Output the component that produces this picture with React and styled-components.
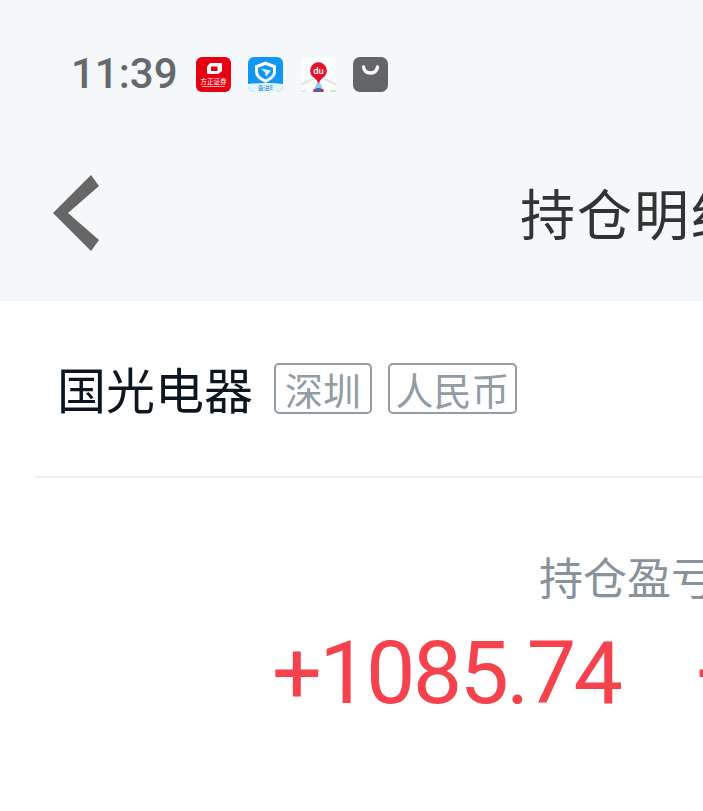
import React from 'react';
import styled, { createGlobalStyle } from 'styled-components';

const Global = createGlobalStyle`
  html, body { margin: 0; padding: 0; background: #fff; }
  body { font-family: Roboto, "Noto Sans CJK SC", sans-serif; }
`;

const Page = styled.div`
  width: 703px;
  height: 811px;
  overflow: hidden;
  background: #fff;
`;

// Top area, status bar + nav
const Header = styled.header`
  height: 301px;
  background: #f4f8fb;
`;

const StatusBar = styled.div`
  display: flex;
  align-items: center;
  height: 74px;
  padding: 37px 0 0 71px;
`;

const Time = styled.span`
  width: 125px;
  font-size: 42px;
  font-weight: 500;
  line-height: 74px;
  color: #66696c;
`;

const AppIcons = styled.div`
  display: flex;
  gap: 17.3px;
`;

const AppIcon = styled.svg`
  display: block;
  width: 35px;
  height: 35px;
`;

const Nav = styled.div`
  display: flex;
  align-items: center;
  height: 130px;
  margin-top: 37px;
  padding-left: 53px;
  white-space: nowrap;
`;

const Back = styled.svg`
  flex: none;
  width: 46px;
  height: 76px;
`;

const Title = styled.h1`
  margin: 0 0 0 421px;
  padding-bottom: 4px;
  font-size: 55px;
  font-weight: 400;
  letter-spacing: 2px;
  color: #333;
  font-family: "Noto Sans CJK SC", sans-serif;
`;

const StockRow = styled.div`
  display: flex;
  align-items: center;
  height: 177px;
  margin-left: 35px;
  padding-left: 22px;
  border-bottom: 2px solid #eef0f3;
  box-sizing: border-box;
`;

const StockName = styled.span`
  padding-bottom: 3px;
  font-size: 49px;
  color: #0b1620;
  font-family: "Noto Sans CJK SC", sans-serif;
  margin-right: 21px;
`;

const Tag = styled.span`
  box-sizing: border-box;
  width: ${props => props.$width}px;
  height: 51px;
  display: flex;
  align-items: center;
  justify-content: center;
  margin-right: 16px;
  border: 2px solid #929ca4;
  border-radius: 5px;
  font-size: 38px;
  color: #929ca4;
  white-space: nowrap;
  font-family: "Noto Sans CJK SC", sans-serif;
`;

const Stats = styled.section`
  padding: 71px 0 0 272px;
  white-space: nowrap;
`;

const StatLabel = styled.div`
  margin-left: 267px;
  font-size: 44px;
  line-height: 54px;
  color: #87929b;
  font-family: "Noto Sans CJK SC", sans-serif;
`;

const StatValues = styled.div`
  display: flex;
  gap: 76px;
  margin-top: 18px;
`;

const StatValue = styled.span`
  font-size: 88px;
  line-height: 104px;
  letter-spacing: -2.7px;
  color: #f5424d;
`;

const FounderIcon = () => (
  <AppIcon viewBox="0 0 35 35">
    <rect width="35" height="35" rx="6" fill="#e60012" />
    <path d="M14 6 H25 a1 1 0 0 1 1 1 V14 L22 17 H12 a1 1 0 0 1 -1 -1 V9.5 Z" fill="#fff" />
    <rect x="15" y="9.5" width="6.5" height="4.5" rx="0.5" fill="#e60012" />
    <text x="17.5" y="26.5" textAnchor="middle" fontSize="6.6" fontFamily="Noto Sans CJK SC" fill="#fff">方正证券</text>
    <rect x="6" y="29" width="23" height="1" fill="#f6a3a3" />
  </AppIcon>
);

const ShieldIcon = () => (
  <AppIcon viewBox="0 0 35 35">
    <rect width="35" height="35" rx="6" fill="#1296f3" />
    <path d="M0 27 Q17.5 25 35 27 V29 a6 6 0 0 1 -6 6 H6 a6 6 0 0 1 -6 -6 Z" fill="#e6f4fd" />
    <path d="M17.5 4.5 L28 8.5 V15 Q28 21 17.5 26 Q7 21 7 15 V8.5 Z" fill="#fff" />
    <path d="M17.5 8 L25 10.8 V15 Q25 19 17.5 22.5 Q10 19 10 15 V10.8 Z" fill="#1296f3" />
    <path d="M13 11.5 L23 13.5 L18 20 L17 15.5 Z" fill="#d9effd" />
    <text x="17.5" y="33" textAnchor="middle" fontSize="6" fontFamily="Noto Sans CJK SC" fill="#1a86d8">备进E</text>
  </AppIcon>
);

const BaiduIcon = () => (
  <AppIcon viewBox="0 0 35 35">
    <rect width="35" height="35" rx="5" fill="#fdfdfd" />
    <path d="M0 26 L11 21 L13 22.5 L0 29 Z M35 26 L24 21 L22 22.5 L35 29 Z" fill="#e4e6e6" />
    <path d="M12 35 L16 25 H19 L23 35 Z" fill="#9ccdec" />
    <rect x="15" y="31" width="5" height="4" fill="#3a6fb0" />
    <rect x="12.5" y="32" width="2.5" height="3" fill="#d8263a" />
    <rect x="20" y="32" width="2.5" height="3" fill="#d8263a" />
    <rect x="29" y="33" width="6" height="2" fill="#cfe8b8" />
    <rect x="0" y="33" width="5" height="2" fill="#d4ecf8" />
    <path d="M17.5 26.5 Q15.5 22 11.5 19.5 A8.4 8.4 0 1 1 23.5 19.5 Q19.5 22 17.5 26.5 Z" fill="#e60f2d" />
    <text x="17.5" y="16.5" textAnchor="middle" fontSize="9.5" fontWeight="500" fontFamily="Roboto" fill="#fff">du</text>
  </AppIcon>
);

const BagIcon = () => (
  <AppIcon viewBox="0 0 35 35">
    <rect width="35" height="35" rx="7" fill="#636568" />
    <path d="M10.5 10 Q11.5 16 17.5 16 Q23.5 16 24.5 10" fill="none" stroke="#fff" strokeWidth="3.4" strokeLinecap="round" />
  </AppIcon>
);

const App = () => (
  <Page>
    <Global />
    <Header>
      <StatusBar>
        <Time>11:39</Time>
        <AppIcons>
          <FounderIcon />
          <ShieldIcon />
          <BaiduIcon />
          <BagIcon />
        </AppIcons>
      </StatusBar>
      <Nav>
        <Back viewBox="0 0 46 76">
          <path d="M38 0 L46 11 L15 38 L46 65 L38 76 L0 38 Z" fill="#666" />
        </Back>
        <Title>持仓明细</Title>
      </Nav>
    </Header>
    <StockRow>
      <StockName>国光电器</StockName>
      <Tag $width={98}>深圳</Tag>
      <Tag $width={129}>人民币</Tag>
    </StockRow>
    <Stats>
      <StatLabel>持仓盈亏</StatLabel>
      <StatValues>
        <StatValue>+1085.74</StatValue>
        <StatValue>+</StatValue>
      </StatValues>
    </Stats>
  </Page>
);

export default App;
